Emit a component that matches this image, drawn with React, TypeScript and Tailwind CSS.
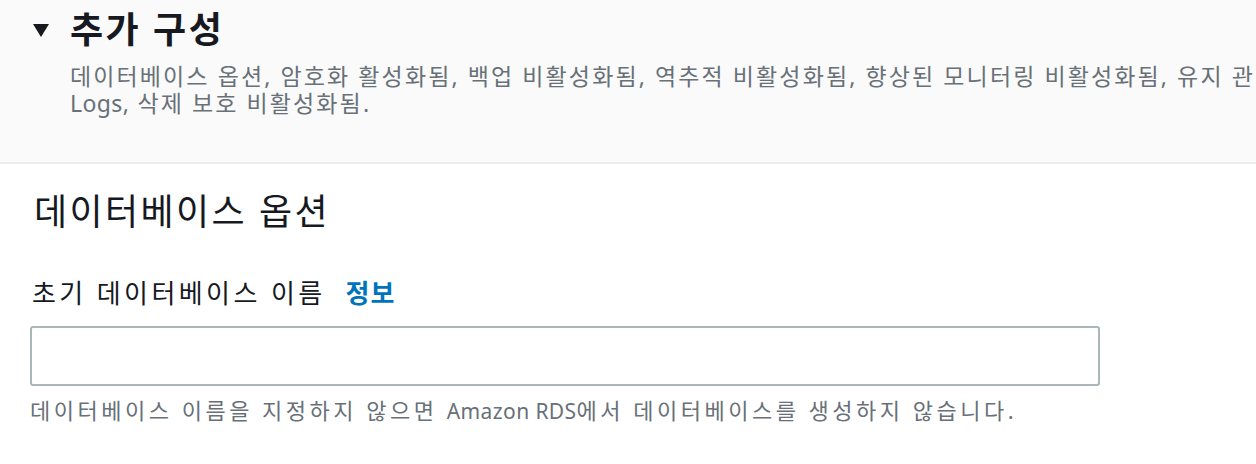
import React from "react";

const font = "font-['Noto_Sans','Noto_Sans_CJK_KR',sans-serif]";

// Latin words keep normal spacing; the Hangul around them is tracked out
function Latin({ children, size }: { children: React.ReactNode; size: string }) {
  return <span className={`${size} tracking-[0.4px]`}>{children}</span>;
}

export default function App() {
  return (
    <div className={`w-[1256px] h-[464px] overflow-hidden bg-white text-[#16191f] ${font}`}>
      {/* expandable section header */}
      <div className="h-[164px] border-b-2 border-[#eaeded] bg-[#fafafa] pl-[33px] pt-[8px]">
        <div className="flex items-center">
          <svg width="16" height="13" viewBox="0 0 16 13" className="mr-[21px]">
            <path d="M0 0 L16 0 L8 13 Z" fill="#16191f" />
          </svg>
          <h1 className="text-[36px] font-bold leading-[44px] tracking-[2.5px]">추가 구성</h1>
        </div>
        <p className="mt-[11px] whitespace-nowrap pl-[37px] text-[23px] leading-[27px] tracking-[2.1px] text-[#687078]">
          데이터베이스 옵션, 암호화 활성화됨, 백업 비활성화됨, 역추적 비활성화됨, 향상된 모니터링 비활성화됨, 유지 관리,{" "}
          <Latin size="text-[23px]">CloudWatch</Latin>
          <br />
          <Latin size="text-[23px]">Logs,</Latin> 삭제 보호 비활성화됨.
        </p>
      </div>

      {/* database options */}
      <div className="px-[30px]">
        <h2 className="mt-[26px] pl-[4px] text-[36px] font-normal leading-[44px] tracking-[2.4px]">데이터베이스 옵션</h2>
        <div className="mt-[43px] flex items-center gap-[20px] pl-[2px] text-[26px] leading-[32px]">
          <span className="tracking-[3.4px]">초기 데이터베이스 이름</span>
          <a className="font-bold tracking-[1px] text-[#0073bb]">정보</a>
        </div>
        <input
          type="text"
          className="mt-[17px] block h-[60px] w-[1070px] rounded-[3px] border-2 border-[#aab7b8] bg-white px-3 text-[22px] outline-none"
        />
        <p className="mt-[10px] whitespace-nowrap text-[22px] leading-[28px] tracking-[3.5px] text-[#687078]">
          데이터베이스 이름을 지정하지 않으면 <Latin size="text-[21px]">Amazon RDS</Latin>에서 데이터베이스를 생성하지 않습니다.
        </p>
      </div>
    </div>
  );
}
